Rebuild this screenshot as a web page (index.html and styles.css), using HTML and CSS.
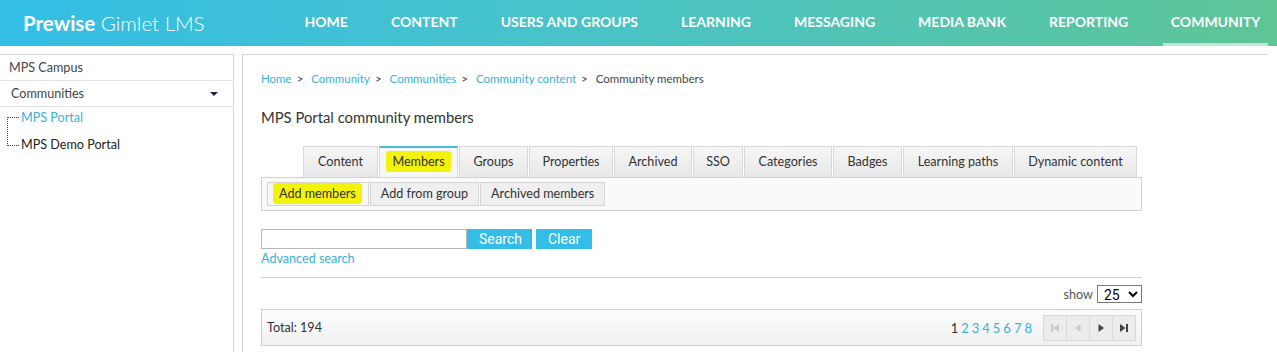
FILE: index.html
```html
<!DOCTYPE html>
<html lang="en">
<head>
    <meta charset="UTF-8">
    <title>Prewise Gimlet LMS - Community members</title>
    <link rel="stylesheet" href="styles.css">
</head>
<body>
    <div class="topbar">
        <div class="logo"><b>Prewise</b> Gimlet LMS</div>
        <div class="mainnav">
            <a>HOME</a>
            <a>CONTENT</a>
            <a>USERS AND GROUPS</a>
            <a>LEARNING</a>
            <a>MESSAGING</a>
            <a>MEDIA BANK</a>
            <a>REPORTING</a>
            <a class="active">COMMUNITY</a>
        </div>
    </div>

    <div class="page">
        <div class="sidebar">
            <div class="side-row">MPS Campus</div>
            <div class="side-row side-group">Communities <span class="caret"></span></div>
            <div class="tree">
                <div class="tree-item current">MPS Portal</div>
                <div class="tree-item">MPS Demo Portal</div>
            </div>
        </div>

        <div class="content">
            <div class="crumbs">
                <a>Home</a><span class="sep">&gt;</span>
                <a>Community</a><span class="sep">&gt;</span>
                <a>Communities</a><span class="sep">&gt;</span>
                <a>Community content</a><span class="sep">&gt;</span>
                <span>Community members</span>
            </div>
            <h1>MPS Portal community members</h1>

            <div class="tabs">
                <div class="tab">Content</div>
                <div class="tab active"><span class="mark">Members</span></div>
                <div class="tab">Groups</div>
                <div class="tab">Properties</div>
                <div class="tab">Archived</div>
                <div class="tab">SSO</div>
                <div class="tab">Categories</div>
                <div class="tab">Badges</div>
                <div class="tab">Learning paths</div>
                <div class="tab">Dynamic content</div>
            </div>
            <div class="subbar">
                <div class="subbtn"><span class="mark">Add members</span></div>
                <div class="subbtn">Add from group</div>
                <div class="subbtn">Archived members</div>
            </div>

            <div class="search">
                <input type="text">
                <button class="btn">Search</button>
                <button class="btn">Clear</button>
            </div>
            <a class="adv">Advanced search</a>
            <hr>

            <div class="show">show
                <select><option>25</option></select>
            </div>
            <div class="pager">
                <div>Total: 194</div>
                <div class="pages">
                    <span class="cur">1</span>
                    <a>2</a><a>3</a><a>4</a><a>5</a><a>6</a><a>7</a><a>8</a>
                </div>
                <div class="arrows">
                    <span class="arr off"><svg width="10" height="10" viewBox="0 0 10 10"><rect x="1" y="1" width="2" height="8"/><path d="M9 1 L3.5 5 L9 9 Z"/></svg></span>
                    <span class="arr off"><svg width="10" height="10" viewBox="0 0 10 10"><path d="M7.5 1 L2 5 L7.5 9 Z"/></svg></span>
                    <span class="arr"><svg width="10" height="10" viewBox="0 0 10 10"><path d="M2.5 1 L8 5 L2.5 9 Z"/></svg></span>
                    <span class="arr"><svg width="10" height="10" viewBox="0 0 10 10"><path d="M1 1 L6.5 5 L1 9 Z"/><rect x="7" y="1" width="2" height="8"/></svg></span>
                </div>
            </div>
        </div>
    </div>
</body>
</html>
```

FILE: styles.css
```css
body {
    margin: 0;
    font-family: 'Lato', 'Open Sans', sans-serif;
    font-size: 12.6px;
    color: #333;
    background: #fff;
}
a {
    color: #3ab0de;
    text-decoration: none;
}
.topbar {
    height: 46px;
    background: linear-gradient(to right, #33bde6 0%, #48c3c9 45%, #5ec596 100%);
    display: flex;
    align-items: center;
    color: #fff;
    white-space: nowrap;
}
.logo {
    flex: 0 0 auto;
    font-size: 20.5px;
    padding-left: 23px;
    width: 260px;
    font-weight: 300;
}
.logo b {
    font-weight: 700;
}
.mainnav {
    display: flex;
    height: 46px;
}
.mainnav a {
    flex: 0 0 auto;
    color: #fff;
    font-weight: 700;
    font-size: 14px;
    padding: 0 21.5px;
    line-height: 44px;
}
.mainnav a.active {
    border-bottom: 3px solid rgba(255, 255, 255, 0.6);
    line-height: 43px;
    padding: 0 7.5px;
    margin-left: 13.5px;
}

.page {
    display: flex;
    gap: 8px;
    padding-top: 8px;
    height: 298px;
}
.sidebar {
    flex: 0 0 233px;
    border-top: 1px solid #d6d6d6;
    border-right: 1px solid #d6d6d6;
}
.side-row {
    height: 25px;
    line-height: 25px;
    padding-left: 9px;
    border-bottom: 1px solid #e2e2e2;
    color: #444;
}
.side-group {
    padding-left: 11px;
    position: relative;
}
.caret {
    position: absolute;
    right: 15px;
    top: 11px;
    border-left: 4px solid transparent;
    border-right: 4px solid transparent;
    border-top: 4px solid #1a2440;
}
.tree {
    position: relative;
    padding-left: 21px;
}
.tree::before {
    content: "";
    position: absolute;
    left: 7px;
    top: 10px;
    width: 11px;
    height: 27px;
    border: 1px dotted #444;
    border-right: none;
}
.tree-item {
    height: 27px;
    line-height: 22px;
    color: #222;
}
.tree-item.current {
    color: #3ab0de;
}

.content {
    flex: 1;
    min-width: 0;
    border-top: 1px solid #d6d6d6;
    border-left: 1px solid #d6d6d6;
    margin-right: 9px;
    padding: 17px 126px 0 18px;
}
.crumbs {
    font-size: 11.5px;
    color: #444;
}
.crumbs .sep {
    margin: 0 5px;
}
h1 {
    font-size: 14.8px;
    font-weight: 400;
    margin: 23px 0 0;
    color: #333;
}
.tabs {
    display: flex;
    margin: 20px 0 0 42px;
}
.tab {
    height: 30px;
    line-height: 30px;
    color: #333;
    background: linear-gradient(#f6f6f6, #e7e7e7);
    border: 1px solid #d8d8d8;
    border-bottom: none;
    margin-right: 1px;
    text-align: center;
    white-space: nowrap;
}
.tab:nth-child(1) { width: 73px; }
.tab:nth-child(2) { width: 77px; }
.tab:nth-child(3) { width: 67px; }
.tab:nth-child(4) { width: 82px; }
.tab:nth-child(5) { width: 76px; }
.tab:nth-child(6) { width: 48px; }
.tab:nth-child(7) { width: 86px; }
.tab:nth-child(8) { width: 67px; }
.tab:nth-child(9) { width: 108px; }
.tab:nth-child(10) { width: 121px; }
.tab.active {
    background: #f7f7f7;
    border-top: 2px solid #4cb8d8;
    height: 29px;
    line-height: 28px;
}
.mark {
    background: #f2f20a;
    border-radius: 3px;
    padding: 3px 6px;
}
.subbar {
    border: 1px solid #d2d2d2;
    background: #fafafa;
    padding: 4px 5px;
    display: flex;
    gap: 1px;
}
.subbtn {
    height: 22px;
    line-height: 22px;
    padding: 0 10px;
    border: 1px solid #d4d4d4;
    background: #efefef;
    color: #333;
}
.subbtn:first-child {
    padding: 0 6px 0 5px;
    background: #f7f7f7;
}
.search {
    display: flex;
    margin-top: 18px;
    height: 20px;
}
.search input {
    width: 200px;
    height: 16px;
    border: 1px solid #b8b8b8;
    padding: 1px 2px;
    margin: 0;
}
.btn {
    background: #33bde9;
    color: #fff;
    border: none;
    font-family: 'Roboto', sans-serif;
    font-size: 14px;
    font-weight: 400;
    height: 20px;
    padding: 0 12px;
    margin: 0 4px 0 0;
}
.btn:first-of-type {
    width: 65px;
}
.btn:last-of-type {
    width: 56px;
}
.adv {
    display: block;
    margin-top: 2px;
}
hr {
    border: none;
    border-top: 1px solid #d0d0d0;
    margin: 11px 0 0;
}
.show {
    display: flex;
    justify-content: flex-end;
    align-items: center;
    gap: 4px;
    margin-top: 7px;
    color: #555;
}
.show select {
    height: 18px;
    width: 45px;
    font-size: 14px;
    font-family: 'Roboto', sans-serif;
    border: 1px solid #777;
    border-radius: 0;
    background: #fff;
    color: #000;
    padding: 0 2px;
}
.pager {
    margin-top: 6px;
    height: 35px;
    border: 1px solid #d0d0d0;
    background: linear-gradient(#fcfcfc, #f1f1f1);
    display: flex;
    align-items: center;
    padding: 0 5px;
    color: #333;
}
.pages {
    margin-left: auto;
    margin-right: 11px;
    font-size: 13px;
    display: flex;
    gap: 3px;
}
.arrows {
    display: flex;
    border: 1px solid #d8d8d8;
    background: #ececec;
    height: 24px;
}
.arr {
    width: 22px;
    display: flex;
    align-items: center;
    justify-content: center;
    border-right: 1px solid #dcdcdc;
    fill: #444;
}
.arr:last-child {
    border-right: none;
}
.arr.off {
    fill: #c8c8c8;
}
```
